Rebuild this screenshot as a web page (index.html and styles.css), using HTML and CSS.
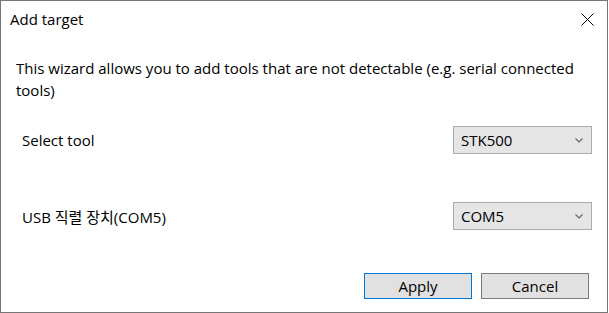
FILE: index.html
```html
<!DOCTYPE html>
<html lang="en">
<head>
  <meta charset="UTF-8">
  <meta name="viewport" content="width=device-width, initial-scale=1.0">
  <title>Add target</title>
  <link rel="stylesheet" href="styles.css">
</head>

<body>
  <div class="dialog">
    <header class="title-bar">
      <span class="title">Add target</span>
      <button class="close-btn" aria-label="Close">
        <svg width="13" height="13" viewBox="0 0 13 13">
          <path d="M0.5 0.5 L12.5 12.5 M12.5 0.5 L0.5 12.5" stroke="#000" stroke-width="1" fill="none"/>
        </svg>
      </button>
    </header>

    <p class="intro">This wizard allows you to add tools that are not detectable (e.g. serial connected tools)</p>

    <div class="field-row first">
      <label>Select tool</label>
      <div class="combo">
        <span>STK500</span>
        <svg class="chevron" width="8" height="5" viewBox="0 0 8 5">
          <path d="M0.5 0.5 L4 4 L7.5 0.5" stroke="#666" stroke-width="1.2" fill="none"/>
        </svg>
      </div>
    </div>

    <div class="field-row second">
      <label>USB 직렬 장치(COM5)</label>
      <div class="combo">
        <span>COM5</span>
        <svg class="chevron" width="8" height="5" viewBox="0 0 8 5">
          <path d="M0.5 0.5 L4 4 L7.5 0.5" stroke="#666" stroke-width="1.2" fill="none"/>
        </svg>
      </div>
    </div>

    <footer class="actions">
      <button class="btn btn-default">Apply</button>
      <button class="btn">Cancel</button>
    </footer>
  </div>
</body>
</html>
```

FILE: styles.css
```css
* {
  margin: 0;
  padding: 0;
  box-sizing: border-box;
  font-family: 'Open Sans', 'Noto Sans CJK KR', sans-serif;
}

body {
  background: #ffffff;
  color: #000000;
  width: 609px;
  height: 313px;
  overflow: hidden;
}

.dialog {
  width: 608px;
  height: 313px;
  border: 1px solid #767676;
  background: #ffffff;
  display: flex;
  flex-direction: column;
}

.title-bar {
  height: 37px;
  display: flex;
  justify-content: space-between;
  align-items: center;
  padding-left: 9px;
  padding-right: 13px;
}

.title {
  font-size: 15px;
  padding-bottom: 1px;
}

.close-btn {
  background: none;
  border: none;
  width: 13px;
  height: 13px;
  display: flex;
}

.intro {
  font-size: 15px;
  line-height: 22px;
  padding: 19px 30px 0 15px;
}

.field-row {
  display: flex;
  justify-content: space-between;
  align-items: center;
  padding-left: 21px;
  padding-right: 15px;
  font-size: 15px;
}

.field-row.first {
  margin-top: 25px;
}

.field-row.second {
  margin-top: 48px;
}

.combo {
  width: 139px;
  height: 28px;
  background: #e5e5e5;
  border: 1px solid #acacac;
  display: flex;
  justify-content: space-between;
  align-items: center;
  padding: 0 8px 0 7px;
  font-size: 15px;
}

.chevron {
  margin-top: 1px;
}

.actions {
  display: flex;
  justify-content: flex-end;
  gap: 9px;
  margin-top: 43px;
  padding-right: 18px;
}

.btn {
  width: 108px;
  height: 26px;
  background: #e1e1e1;
  border: 1px solid #7a7a7a;
  font-size: 15px;
  color: #000;
}

.btn-default {
  border-color: #0078d7;
}
```
